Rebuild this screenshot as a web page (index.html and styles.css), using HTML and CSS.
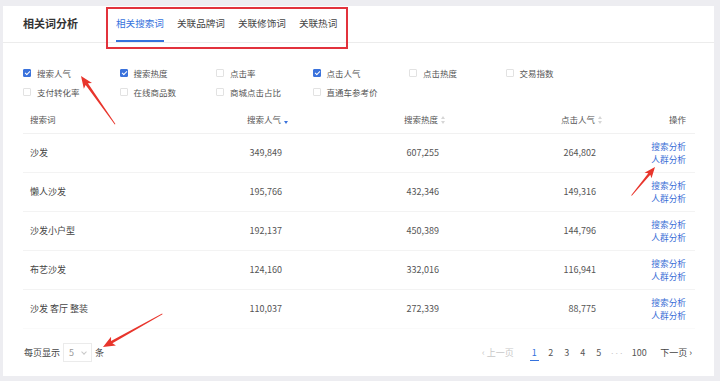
FILE: index.html
```html
<!DOCTYPE html>
<html lang="zh-CN">
<head>
    <meta charset="UTF-8">
    <title>相关词分析</title>
    <link rel="stylesheet" href="styles.css">
</head>
<body>
    <div class="panel">
        <div class="head">
            <h1 class="title">相关词分析</h1>
            <div class="tabs">
                <span class="tab active">相关搜索词</span>
                <span class="tab">关联品牌词</span>
                <span class="tab">关联修饰词</span>
                <span class="tab">关联热词</span>
            </div>
        </div>

        <div class="filters">
            <label class="opt"><span class="box on"></span>搜索人气</label>
            <label class="opt"><span class="box on"></span>搜索热度</label>
            <label class="opt"><span class="box"></span>点击率</label>
            <label class="opt"><span class="box on"></span>点击人气</label>
            <label class="opt"><span class="box"></span>点击热度</label>
            <label class="opt"><span class="box"></span>交易指数</label>
            <label class="opt"><span class="box"></span>支付转化率</label>
            <label class="opt"><span class="box"></span>在线商品数</label>
            <label class="opt"><span class="box"></span>商城点击占比</label>
            <label class="opt"><span class="box"></span>直通车参考价</label>
        </div>

        <table class="words">
            <colgroup>
                <col style="width:127px">
                <col style="width:139px">
                <col style="width:157px">
                <col style="width:157px">
                <col style="width:92px">
            </colgroup>
            <thead>
                <tr>
                    <th class="kw">搜索词</th>
                    <th class="num">搜索人气<span class="sort down"></span></th>
                    <th class="num">搜索热度<span class="sort"></span></th>
                    <th class="num">点击人气<span class="sort"></span></th>
                    <th class="ops">操作</th>
                </tr>
            </thead>
            <tbody>
                <tr>
                    <td class="kw">沙发</td>
                    <td class="num">349,849</td>
                    <td class="num">607,255</td>
                    <td class="num">264,802</td>
                    <td class="ops"><a>搜索分析</a><a>人群分析</a></td>
                </tr>
                <tr>
                    <td class="kw">懒人沙发</td>
                    <td class="num">195,766</td>
                    <td class="num">432,346</td>
                    <td class="num">149,316</td>
                    <td class="ops"><a>搜索分析</a><a>人群分析</a></td>
                </tr>
                <tr>
                    <td class="kw">沙发小户型</td>
                    <td class="num">192,137</td>
                    <td class="num">450,389</td>
                    <td class="num">144,796</td>
                    <td class="ops"><a>搜索分析</a><a>人群分析</a></td>
                </tr>
                <tr>
                    <td class="kw">布艺沙发</td>
                    <td class="num">124,160</td>
                    <td class="num">332,016</td>
                    <td class="num">116,941</td>
                    <td class="ops"><a>搜索分析</a><a>人群分析</a></td>
                </tr>
                <tr>
                    <td class="kw">沙发 客厅 整装</td>
                    <td class="num">110,037</td>
                    <td class="num">272,339</td>
                    <td class="num">88,775</td>
                    <td class="ops"><a>搜索分析</a><a>人群分析</a></td>
                </tr>
            </tbody>
        </table>

        <div class="pager">
            <div class="size">
                每页显示
                <span class="select">5<span class="caret"></span></span>
                条
            </div>
            <div class="pages">
                <span class="prev">&lsaquo; 上一页</span>
                <span class="page current">1</span>
                <span class="page">2</span>
                <span class="page">3</span>
                <span class="page">4</span>
                <span class="page">5</span>
                <span class="dots">···</span>
                <span class="page">100</span>
                <span class="next">下一页 &rsaquo;</span>
            </div>
        </div>
    </div>

    <!-- 标注 -->
    <svg class="marks" width="720" height="381" viewBox="0 0 720 381">
        <rect x="107" y="8" width="240" height="40" fill="none" stroke="#e2323c" stroke-width="2"/>
        <g fill="#e8352c">
            <g transform="translate(81 76) rotate(-125.3)">
                <polygon points="0,0 -12,-5 -10,-1.4 -59,-0.4 -59,0.4 -10,1.4 -12,5"/>
            </g>
            <g transform="translate(655 167) rotate(-50.6)">
                <polygon points="0,0 -11,-4.5 -9,-1.3 -37,-0.4 -37,0.4 -9,1.3 -11,4.5"/>
            </g>
            <g transform="translate(103 347) rotate(150.8)">
                <polygon points="0,0 -12,-5 -10,-1.4 -68,-0.4 -68,0.4 -10,1.4 -12,5"/>
            </g>
        </g>
    </svg>
</body>
</html>
```

FILE: styles.css
```css
* {
    margin: 0;
    padding: 0;
    box-sizing: border-box;
}

body {
    font-family: "Noto Sans CJK SC", "Noto Sans", sans-serif;
    background: #ededf1;
    color: #444;
    width: 720px;
    height: 381px;
    padding: 6px 6px 5px 3px;
    position: relative;
    overflow: hidden;
}

.panel {
    background: #fff;
    height: 370px;
}

.head {
    height: 37px;
    border-bottom: 1px solid #ececec;
    display: flex;
    align-items: stretch;
    padding-left: 20px;
}

.title {
    font-size: 11px;
    font-weight: bold;
    color: #333;
    line-height: 35px;
    width: 93px;
}

.tabs {
    display: flex;
    gap: 13px;
}

.tab {
    font-size: 9.6px;
    color: #444;
    line-height: 35px;
    height: 36px;
}

.tab.active {
    color: #3572dd;
    border-bottom: 2px solid #3572dd;
}

.filters {
    display: grid;
    grid-template-columns: repeat(6, 96.5px);
    grid-auto-rows: 19px;
    padding: 20px 0 0 20px;
}

.opt {
    display: flex;
    align-items: center;
    font-size: 8.5px;
    color: #555;
}

.box {
    width: 8px;
    height: 8px;
    border: 1px solid #e2e2e2;
    border-radius: 1px;
    margin-right: 6px;
    position: relative;
}

.box.on {
    background: #3a72dc;
    border-color: #3a72dc;
}

.box.on::after {
    content: "";
    position: absolute;
    left: 2px;
    top: 0px;
    width: 2px;
    height: 4px;
    border: solid #fff;
    border-width: 0 1px 1px 0;
    transform: rotate(45deg);
}

.words {
    margin: 5px 0 0 20px;
    border-collapse: collapse;
    table-layout: fixed;
    width: 672px;
    font-size: 9px;
}

.words th {
    height: 27px;
    font-weight: normal;
    color: #555;
    font-size: 8.5px;
    border-bottom: 1px solid #f1f1f1;
}

.words td {
    height: 39px;
    border-bottom: 1px solid #f3f3f3;
    color: #444;
}

.words tbody tr:last-child td {
    border-bottom-color: #fafafa;
}

.kw {
    text-align: left;
    padding-left: 7px;
}

.words td.num {
    text-align: right;
    padding-right: 7px;
    color: #555;
}

.words th.num {
    text-align: right;
    padding-right: 0;
}

.ops {
    text-align: right;
    padding-right: 9px;
}

.ops a {
    display: block;
    color: #3a6ed6;
    font-size: 8.7px;
    line-height: 13px;
}

.sort {
    display: inline-block;
    width: 6px;
    height: 8px;
    margin-left: 2px;
    vertical-align: -1px;
    position: relative;
}

.sort::before,
.sort::after {
    content: "";
    position: absolute;
    left: 1px;
    border-left: 2px solid transparent;
    border-right: 2px solid transparent;
}

.sort::before {
    top: 0;
    border-bottom: 3px solid #d6d6d6;
}

.sort::after {
    bottom: 0;
    border-top: 3px solid #d6d6d6;
}

.sort.down::before {
    border-bottom-color: transparent;
}

.sort.down::after {
    border-top-color: #3a72dc;
}

.pager {
    display: flex;
    justify-content: space-between;
    align-items: center;
    height: 24px;
    margin-top: 12px;
    padding: 0 22px 0 21px;
    font-size: 9px;
}

.size {
    display: flex;
    align-items: center;
    gap: 3px;
    color: #444;
}

.select {
    display: inline-flex;
    align-items: center;
    justify-content: space-between;
    width: 29px;
    height: 19px;
    border: 1px solid #ebebeb;
    padding: 0 5px;
    color: #999;
}

.caret {
    width: 4px;
    height: 4px;
    border: solid #c8c8c8;
    border-width: 0 1px 1px 0;
    transform: rotate(45deg);
    margin-top: -2px;
}

.pages {
    display: flex;
    align-items: center;
    gap: 8px;
    color: #555;
}

.prev {
    color: #c8c8c8;
    margin-right: 8px;
}

.page {
    padding: 2px 1.5px;
}

.page.current {
    color: #3572dd;
    border-bottom: 1.5px solid #3572dd;
    padding: 2px 2px 1px;
}

.dots {
    font-family: "Liberation Sans", sans-serif;
    color: #c4c4c4;
    letter-spacing: 1.5px;
    margin-right: -2px;
}

.next {
    color: #444;
    margin-left: 4px;
}

.marks {
    position: absolute;
    left: 0;
    top: 0;
    pointer-events: none;
}
```
